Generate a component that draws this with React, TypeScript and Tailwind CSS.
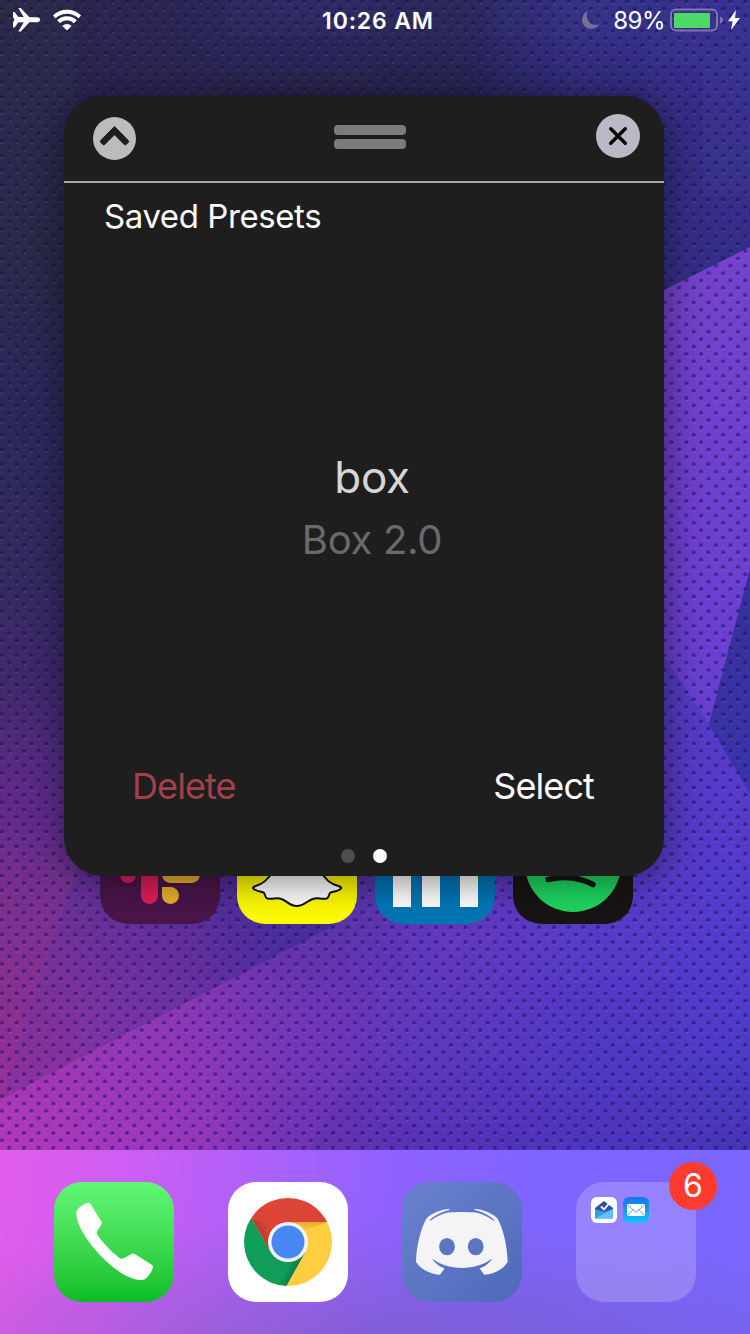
import React from "react";

const meshRows: { y: number; colors: string[] }[] = [
  { y: 0, colors: ["#2b2a45", "#2a2850", "#2e2b66", "#2b2958", "#35308a", "#393092"] },
  { y: 130, colors: ["#2b2a4c", "#292850", "#252440", "#262448", "#302c78", "#38308f"] },
  { y: 260, colors: ["#2a2948", "#262548", "#252444", "#2a2860", "#342f80", "#352f88"] },
  { y: 400, colors: ["#2c2b58", "#2a2860", "#2a2860", "#302c70", "#382f98", "#3a319c"] },
  { y: 540, colors: ["#302b5a", "#302b6a", "#342c78", "#3a2f90", "#4634a8", "#4a36b4"] },
  { y: 680, colors: ["#3e2b66", "#3a2b7c", "#40308c", "#4a34a0", "#563ac0", "#563ac6"] },
  { y: 800, colors: ["#602c88", "#543096", "#4a30a0", "#5436b4", "#583bc8", "#573bcb"] },
  { y: 920, colors: ["#7a3092", "#74339f", "#5430a2", "#6338bf", "#583bc9", "#543bcd"] },
  { y: 1040, colors: ["#8c3098", "#8634aa", "#7034b6", "#5c37bf", "#5139c5", "#503ac9"] },
  { y: 1150, colors: ["#a536ac", "#9435b2", "#6431ac", "#5433b8", "#4d35bc", "#4734b5"] },
];

function Wallpaper() {
  return (
    <svg className="absolute inset-0 h-full w-full" viewBox="0 0 750 1334" aria-hidden="true">
      <defs>
        <filter id="mesh" x="-20%" y="-20%" width="140%" height="140%">
          <feGaussianBlur stdDeviation="42" />
        </filter>
        <pattern id="dots" width="14.72" height="14.7" patternUnits="userSpaceOnUse" patternTransform="translate(-5.6 5)">
          <ellipse cx="7.5" cy="3.4" rx="2.1" ry="2" fill="#170b58" fillOpacity=".52" />
          <ellipse cx="7.8" cy="6" rx="2" ry=".7" fill="#c9a6ff" fillOpacity=".2" />
          <ellipse cx="0.14" cy="10.75" rx="2.1" ry="2" fill="#170b58" fillOpacity=".52" />
          <ellipse cx="14.86" cy="10.75" rx="2.1" ry="2" fill="#170b58" fillOpacity=".52" />
          <ellipse cx=".4" cy="13.3" rx="2" ry=".7" fill="#c9a6ff" fillOpacity=".2" />
        </pattern>
        <linearGradient id="facetRight" x1="0" y1="0" x2="0" y2="1">
          <stop offset="0" stopColor="#7542cc" />
          <stop offset="1" stopColor="#683fd2" />
        </linearGradient>
        <linearGradient id="facetBlue" x1="0" y1="0" x2="0" y2="1">
          <stop offset="0" stopColor="#352f96" />
          <stop offset="1" stopColor="#3a34ae" />
        </linearGradient>
        <linearGradient id="facetLow" gradientUnits="userSpaceOnUse" x1="0" y1="1110" x2="400" y2="960">
          <stop offset="0" stopColor="#c03cd0" stopOpacity=".42" />
          <stop offset=".5" stopColor="#a33bd0" stopOpacity=".3" />
          <stop offset="1" stopColor="#7a3bd0" stopOpacity="0" />
        </linearGradient>
        <linearGradient id="facetDark" gradientUnits="userSpaceOnUse" x1="60" y1="1000" x2="360" y2="900">
          <stop offset="0" stopColor="#30258c" stopOpacity=".1" />
          <stop offset="1" stopColor="#30258c" stopOpacity=".5" />
        </linearGradient>
      </defs>
      <rect width="750" height="1334" fill="#2a2850" />
      <g filter="url(#mesh)">
        {meshRows.map((row, i) => {
          const top = i === 0 ? -150 : (meshRows[i - 1].y + row.y) / 2;
          const bottom = i === meshRows.length - 1 ? 1400 : (row.y + meshRows[i + 1].y) / 2;
          return row.colors.map((c, j) => (
            <rect
              key={`${i}-${j}`}
              x={j === 0 ? -150 : j * 150 - 75}
              y={top}
              width={j === 0 || j === 5 ? 226 : 151}
              height={bottom - top + 1}
              fill={c}
            />
          ));
        })}
      </g>
      <path d="M600 322 750 247V569L709 724 600 560Z" fill="url(#facetRight)" />
      <path d="M750 569 709 724 750 794Z" fill="url(#facetBlue)" />
      <path d="M0 1100 335 925 368 860H80Z" fill="url(#facetDark)" />
      <path d="M0 1100 70 880V860H-1Z" fill="#902a70" fillOpacity=".12" />
      <path d="M0 1100 335 925 400 980 310 1150H0Z" fill="url(#facetLow)" />
      <rect width="750" height="1150" fill="url(#dots)" />
    </svg>
  );
}

function StatusBar() {
  return (
    <header className="relative flex h-10 items-center justify-between text-white">
      <div className="flex w-[290px] items-center gap-[11px] pl-3">
        <svg width="29" height="26" viewBox="0 0 29 26" fill="#fff">
          <path d="M1 5h1.600l3.600 4.800 5.600.4L6.300.9h2.500l8.700 9.300h7.800c1.700 0 2.700 1.100 2.700 2.500s-1 2.500-2.700 2.500h-7.800L8.800 24.500H6.300l5.500-9.300-5.600.4L2.600 20.400H1v-5l1.500-2.700L1 10Z" />
        </svg>
        <svg width="30" height="22" viewBox="0 0 30 22" fill="none" stroke="#fff" strokeWidth="4">
          <path d="M2.200 7.900a18.500 18.500 0 0 1 25.600 0" />
          <path d="M6.600 12.700a12 12 0 0 1 16.800 0" />
          <path d="M10.400 16.900a6.800 6.800 0 0 1 9.200 0L15 21.400Z" fill="#fff" stroke="none" />
        </svg>
      </div>
      <div className="whitespace-nowrap pl-1.5 pt-0.5 text-[23px] font-semibold leading-none tracking-[0.85px]">10:26 AM</div>
      <div className="flex w-[290px] items-center justify-end pr-2.5">
        <svg className="mr-[13px]" width="19" height="20" viewBox="0 0 19 20" fill="#767099">
          <path d="M6.500 1C3.500 9 9.500 17 18.500 14.300 13 22 2 19 1.200 11 .8 6 3.500 2.500 6.500 1Z" />
        </svg>
        <span className="mr-[5px] pt-0.5 text-[24px] leading-none tracking-[-0.5px]">89%</span>
        <svg width="54" height="24" viewBox="0 0 54 24">
          <rect x="1" y="1.500" width="46" height="21" rx="5" fill="none" stroke="#8272b0" strokeWidth="2" />
          <rect x="4" y="5" width="36" height="15" rx="1" fill="#4cd964" />
          <path d="M50 8.500q3 1 3 3.500t-3 3.500Z" fill="#8272b0" />
        </svg>
        <svg className="ml-1" width="12" height="20" viewBox="0 0 12 20" fill="#fff">
          <path d="M8 0 0 11.200h4.600L3 20 12 8H7Z" />
        </svg>
      </div>
    </header>
  );
}

function PresetPanel() {
  return (
    <section className="absolute left-[64px] top-[96px] flex h-[780px] w-[600px] flex-col rounded-[38px] bg-[#1e1e1e] shadow-[0_4px_40px_rgba(0,0,0,0.5)]">
      <div className="flex h-[87px] shrink-0 items-start justify-between border-b-2 border-[#a5a5a5] pl-[29px] pr-6">
        <button className="mt-5" aria-label="Collapse">
          <svg width="50" height="44" viewBox="0 0 50 44">
            <circle cx="21.500" cy="22.500" r="21.500" fill="#bcbcbc" />
            <path
              d="M21.500 10.600 35.200 24.400q1 1 0 2l-2 2q-1 1-2 0L21.500 18.700l-9.700 9.700q-1 1-2 0l-2-2q-1-1 0-2Z"
              fill="#1e1e1e"
              stroke="#1e1e1e"
              strokeWidth="1"
              strokeLinejoin="round"
            />
          </svg>
        </button>
        <div className="mt-[29px] flex flex-col gap-1">
          <div className="h-2.5 w-[72px] rounded-[4px] bg-[#7b7b7b]" />
          <div className="h-2.5 w-[72px] rounded-[4px] bg-[#7b7b7b]" />
        </div>
        <button className="mt-[18px]" aria-label="Close">
          <svg width="44" height="44" viewBox="0 0 44 44">
            <circle cx="22" cy="22" r="22" fill="#bbb9c5" />
            <path d="m14.700 14.700 14.600 14.600m0-14.600L14.700 29.300" stroke="#000" strokeWidth="3.400" strokeLinecap="round" />
          </svg>
        </button>
      </div>
      <h1 className="ml-10 mt-[13px] whitespace-nowrap text-[33px] font-normal leading-10 tracking-[-0.42px] text-white">Saved Presets</h1>
      <div className="mt-[208px] flex flex-col items-center pl-4">
        <div className="h-[66px] text-[44px] leading-[66px] tracking-[-0.3px] text-[#d6d6d6]">box</div>
        <div className="h-[60px] whitespace-nowrap text-[40px] leading-[60px] tracking-[-0.3px] text-[#6a6a6a]">Box 2.0</div>
      </div>
      <div className="mt-auto flex items-center justify-between pl-[68px] pr-[70px] text-[36px] leading-[48px] tracking-[-0.9px]">
        <button className="text-[#a3404a]">Delete</button>
        <button className="text-white">Select</button>
      </div>
      <div className="mb-[13px] mt-[39px] flex justify-center gap-[18px]">
        <span className="h-3.5 w-3.5 rounded-full bg-[#4d4d4d]" />
        <span className="h-3.5 w-3.5 rounded-full bg-white" />
      </div>
    </section>
  );
}

const tile = "h-[120px] w-[120px] rounded-[28px]";

function HomeRow() {
  return (
    <div className="relative mt-[764px] flex h-[120px] pl-[100px]">
      <svg className={`${tile} mr-[17px] bg-[#4a154b]`} viewBox="0 0 120 120">
        <rect x="20" y="50" width="16" height="29" rx="8" fill="#e01e5a" />
        <rect x="41" y="58" width="17" height="42" rx="8.500" fill="#e01e5a" />
        <rect x="62" y="62" width="38" height="17" rx="8.500" fill="#ecb22e" />
        <path d="M62 83h8.500a8.500 8.500 0 1 1-8.500 8.500Z" fill="#ecb22e" />
      </svg>
      <svg className={`${tile} mr-[18px] bg-[#fffc00]`} viewBox="0 0 120 120">
        <path
          d="M36 67c-5 9-10 13-18.500 15.500-2 1-2 2 0 3 3 2 6 2 8 2.500 4 1 1 5 5 6.500 6 1 9-1.500 14 .5 6 2 8 7 15.200 7s10-5 16-7c5-2 8 .5 14-.5 3.500-1.500 1-5.500 5-6.500 2-.5 5-.5 8-2.500 2-1 2-2 0-3C93.500 80 88 76 84 67Z"
          fill="#fff"
          stroke="#111"
          strokeWidth="2"
          strokeLinejoin="round"
        />
      </svg>
      <svg className={`${tile} mr-[18px] bg-[#0077b5]`} viewBox="0 0 120 120" fill="#fff">
        <path d="M18 46h18v57H18ZM47 46h18v57H47ZM85 60h18v43H85Z" />
      </svg>
      <svg className={`${tile} bg-[#181414]`} viewBox="0 0 120 120">
        <circle cx="60" cy="60" r="48" fill="#1ed760" />
        <path d="M35 75.500c17-4 32-2 45 5" fill="none" stroke="#181414" strokeWidth="5.500" strokeLinecap="round" />
      </svg>
    </div>
  );
}

function PhoneIcon() {
  return (
    <svg className={`${tile} bg-gradient-to-b from-[#62f877] to-[#08bd26]`} viewBox="0 0 120 120">
      <path
        d="M22.200 31c0-4.500 7.800-9.300 11.500-10.200 1.600-.4 2.300.3 3.200 1.700l10 16.300c1 1.700 1.100 2.700.2 4.100l-3.500 5.500c-1.200 2-1 3.300.2 5.100 4.800 7.300 13.100 15.600 21.100 22 2 1.500 3.400 1.700 5.200.5l7.500-4c1.300-.7 2.300-.5 3.500.2l16 10c1.800 1.200 2.200 2.200 1.600 4-1.200 4-5.200 9.800-8.700 11.300-8.500 2.700-22.500-5.300-33-14C41 69.500 22.500 47 22.200 31Z"
        fill="#fff"
      />
    </svg>
  );
}

function ChromeIcon() {
  return (
    <svg className={`${tile} bg-white`} viewBox="0 0 120 120">
      <defs>
        <clipPath id="chromeDisc">
          <circle cx="60" cy="60" r="44" />
        </clipPath>
        <linearGradient id="redShade" gradientUnits="userSpaceOnUse" x1="33" y1="54" x2="44" y2="48">
          <stop offset="0" stopColor="#992b20" stopOpacity=".4" />
          <stop offset="1" stopColor="#992b20" stopOpacity="0" />
        </linearGradient>
        <linearGradient id="yellowShade" x1="0" y1="0" x2="0" y2="1">
          <stop offset="0" stopColor="#b87818" stopOpacity=".4" />
          <stop offset="1" stopColor="#b87818" stopOpacity="0" />
        </linearGradient>
        <linearGradient id="greenShade" gradientUnits="userSpaceOnUse" x1="68" y1="87" x2="60" y2="83">
          <stop offset="0" stopColor="#064b2d" stopOpacity=".4" />
          <stop offset="1" stopColor="#064b2d" stopOpacity="0" />
        </linearGradient>
      </defs>
      <g clipPath="url(#chromeDisc)">
        <path d="M0 0h120v40H60L42.500 70 23.700 37Z" fill="#db4437" />
        <path d="M23.700 37 42.700 70 60 60l17.500 10-19 34V120H0V30Z" fill="#0f9d58" />
        <path d="M60 40h60v80H49.500L77.500 70Z" fill="#ffcd40" />
        <path d="M23.700 37 42.700 70 54 45Z" fill="url(#redShade)" />
        <path d="M60 40h39L76 49Z" fill="url(#yellowShade)" />
        <path d="M77.500 70 58.500 104 50 104 54 75Z" fill="url(#greenShade)" />
      </g>
      <circle cx="60" cy="60" r="20" fill="#f1f3f6" />
      <circle cx="60" cy="60" r="16.500" fill="#4788f4" />
    </svg>
  );
}

function DiscordIcon() {
  return (
    <svg className={`${tile} bg-gradient-to-br from-[#6a82cc] to-[#4f69bb]`} viewBox="0 0 120 120">
      <g fill="#f4f4f5">
        <path d="M28.500 38.800c5-4 11-7 18-8.300 8-.8 19-.8 27 0 7 1.300 13 4.300 18 8.300l4-2.300c5 9 9.700 25 10.200 43.500-4 7-13 12-23.500 12.700l-4.500-6.200c5.500-2.300 9-4.800 12.500-9.700-9 6-18 9.200-30.200 9.200S39 82.800 30 76.800c3.500 4.900 7 7.400 12.500 9.700L38 92.700C27.500 92 18.500 87 14 80c.5-18.500 5.500-34.500 10.500-43.500Z" />
        <path d="M24.500 36.700C29.500 31 39.500 27.500 47.500 26.800l-.5 1.300C39 30.200 31.800 33.700 26.800 38.700Z" />
        <path d="M95.500 36.700c-5-5.700-15-9.200-23-9.900l.5 1.300c8 2.100 15.200 5.600 20.200 10.600Z" />
      </g>
      <ellipse cx="45" cy="64.600" rx="7.900" ry="8.600" fill="#5b76bf" />
      <ellipse cx="73.700" cy="64.600" rx="7.900" ry="8.600" fill="#5b76bf" />
    </svg>
  );
}

function FolderIcon() {
  return (
    <div className={`${tile} relative flex gap-1.5 bg-white/20 pl-[15px] pt-[15px]`}>
      <svg className="h-[26px] w-[26px] rounded-md bg-white" viewBox="0 0 26 26">
        <path d="M4 11 13 4l9 7v9.500H4Z" fill="#3050a8" />
        <path d="m4 12 9 3 9-3v8.500q0 1-1 1H5q-1 0-1-1Z" fill="#329eea" />
        <path d="M4 21.500 22 12v8.500q0 1-1 1Z" fill="#5bc2fa" />
        <path d="m10 9.500 3 3 5-6" fill="none" stroke="#fff" strokeWidth="1.800" />
      </svg>
      <svg className="h-[26px] w-[26px] rounded-md bg-gradient-to-b from-[#1d70ef] to-[#19c4fb]" viewBox="0 0 26 26">
        <rect x="4" y="7" width="18" height="12" rx="1.200" fill="#fff" />
        <path d="m4.500 8 8.500 7.200L21.500 8M4.500 18.500l5.500-5.800m11.500 5.800-5.500-5.800" fill="none" stroke="#3593df" strokeWidth=".8" />
      </svg>
      <span className="absolute left-[93px] top-[-20px] flex h-12 w-12 items-center justify-center rounded-full bg-[#ff3b30] text-[32px] leading-none text-white">6</span>
    </div>
  );
}

export default function App() {
  return (
    <main className="relative flex h-[1334px] w-[750px] flex-col overflow-hidden font-['Inter','Liberation_Sans',sans-serif]">
      <Wallpaper />
      <StatusBar />
      <HomeRow />
      <PresetPanel />
      <footer className="relative mt-auto h-[184px] bg-[linear-gradient(97deg,#e35dea_0%,#cb5ef5_18%,#a961fb_36%,#9062ff_50%,#8064ff_68%,#7966ff_100%)]">
        <div className="flex h-full justify-between bg-[radial-gradient(ellipse_75%_75%_at_50%_110%,rgba(115,90,165,0.5)_0%,rgba(105,85,165,0)_100%)] px-[54px] pt-8">
          <PhoneIcon />
          <ChromeIcon />
          <DiscordIcon />
          <FolderIcon />
        </div>
      </footer>
    </main>
  );
}
